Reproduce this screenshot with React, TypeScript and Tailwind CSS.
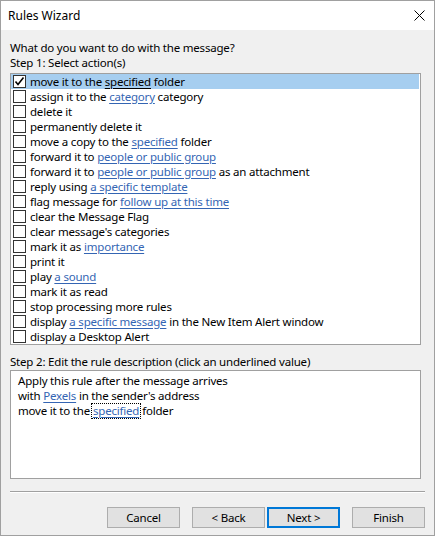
import React from 'react';

type Part = string | { link: string };

const actions: Part[][] = [
  ['move it to the ', { link: 'specified' }, ' folder'],
  ['assign it to the ', { link: 'category' }, ' category'],
  ['delete it'],
  ['permanently delete it'],
  ['move a copy to the ', { link: 'specified' }, ' folder'],
  ['forward it to ', { link: 'people or public group' }],
  ['forward it to ', { link: 'people or public group' }, ' as an attachment'],
  ['reply using ', { link: 'a specific template' }],
  ['flag message for ', { link: 'follow up at this time' }],
  ['clear the Message Flag'],
  ["clear message's categories"],
  ['mark it as ', { link: 'importance' }],
  ['print it'],
  ['play ', { link: 'a sound' }],
  ['mark it as read'],
  ['stop processing more rules'],
  ['display ', { link: 'a specific message' }, ' in the New Item Alert window'],
  ['display a Desktop Alert'],
];

function Checkbox({ checked }: { checked?: boolean }) {
  return (
    <div className="w-[13px] h-[13px] border border-[#333333] bg-white flex items-center justify-center shrink-0">
      {checked && (
        <svg width="11" height="11" viewBox="0 0 11 11">
          <path d="M1.5 5.5 L4 8.5 L9.5 1.5" fill="none" stroke="#000" strokeWidth="1.6" />
        </svg>
      )}
    </div>
  );
}

function ActionRow({ parts, selected }: { parts: Part[]; selected?: boolean }) {
  return (
    <div
      className={`h-[15px] flex items-center pl-[2px] mr-[1px] ${selected ? 'bg-[#a6cef0]' : ''}`}
    >
      <Checkbox checked={selected} />
      <span className="ml-[4px] whitespace-pre leading-[14px]">
        {parts.map((p, i) =>
          typeof p === 'string' ? (
            <span key={i}>{p}</span>
          ) : (
            <span
              key={i}
              className={`underline underline-offset-[2px] ${selected ? 'text-black' : 'text-[#3465b3]'}`}
            >
              {p.link}
            </span>
          )
        )}
      </span>
    </div>
  );
}

function Button({ label, primary }: { label: string; primary?: boolean }) {
  return (
    <button
      className={`w-[73px] h-[21px] bg-[#e1e1e1] leading-none flex items-center justify-center ${
        primary ? 'border-2 border-[#0078d7]' : 'border border-[#adadad]'
      }`}
    >
      {label}
    </button>
  );
}

export default function App() {
  return (
    <div
      className="w-[435px] h-[536px] border border-[#a0a0a0] bg-[#f0f0f0] flex flex-col text-[11.5px] tracking-[-0.2px] text-black"
      style={{ fontFamily: '"Noto Sans", "Open Sans", sans-serif' }}
    >
      {/* Title bar */}
      <div className="h-[29px] bg-white flex items-center justify-between pl-[7px] pr-[9px]">
        <span className="text-[12px] tracking-normal">Rules Wizard</span>
        <svg width="11" height="11" viewBox="0 0 11 11">
          <path d="M0.5 0.5 L10.5 10.5 M10.5 0.5 L0.5 10.5" stroke="#000" strokeWidth="1" />
        </svg>
      </div>

      <div className="flex flex-col pl-[9px] pr-[9px] pt-[10px]">
        <div className="leading-[15px]">What do you want to do with the message?</div>
        <div className="leading-[15px]">Step 1: Select action(s)</div>

        <div className="mt-[3px] w-[411px] h-[272px] border border-[#a0a0a0] bg-white">
          {actions.map((parts, i) => (
            <ActionRow key={i} parts={parts} selected={i === 0} />
          ))}
        </div>

        <div className="mt-[9px] leading-[15px]">
          Step 2: Edit the rule description (click an underlined value)
        </div>

        <div className="mt-[1px] w-[411px] h-[109px] border border-[#a0a0a0] bg-white pt-[2px] pl-[7px]">
          <div className="leading-[15px]">Apply this rule after the message arrives</div>
          <div className="leading-[15px]">
            with <span className="text-[#3465b3] underline underline-offset-[2px]">Pexels</span> in
            the sender's address
          </div>
          <div className="leading-[14px] h-[15px] flex items-center">
            <span>move it to the</span>
            <span className="text-[#3465b3] underline underline-offset-[2px] outline outline-1 outline-dotted outline-black px-[1px] mx-[2px]">
              specified
            </span>
            <span>folder</span>
          </div>
        </div>

        <div className="mt-[12px] w-[415px] border-t border-t-[#a0a0a0] border-b border-b-white" />

        <div className="mt-[14px] w-[415px] flex justify-end">
          <Button label="Cancel" />
          <div className="w-[12px]" />
          <Button label="< Back" />
          <div className="w-[2px]" />
          <Button label="Next >" primary />
          <div className="w-[12px]" />
          <Button label="Finish" />
        </div>
      </div>
    </div>
  );
}
